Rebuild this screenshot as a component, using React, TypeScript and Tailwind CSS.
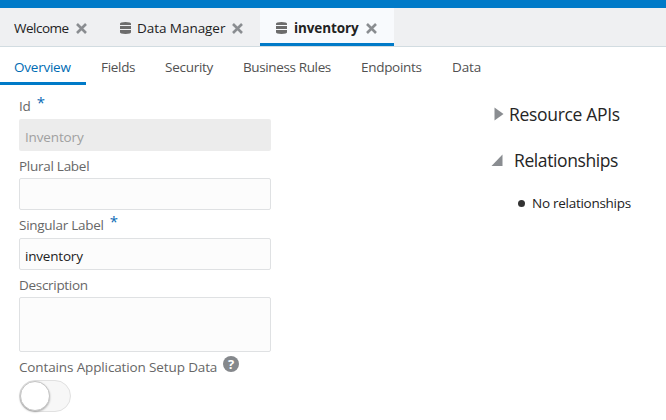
import type { ReactNode } from "react";

function Close() {
  return (
    <svg className="mt-px block shrink-0" width="11" height="11" viewBox="0 0 11 11" fill="none" stroke="#8a8d91" strokeWidth="2.6">
      <path d="M1 1 10 10M10 1 1 10" />
    </svg>
  );
}

function Database() {
  return (
    <svg className="mt-px block shrink-0" width="11" height="12" viewBox="0 0 11 12" fill="#6c6c6c">
      <path d="M0 1.8Q0 0 5.5 0T11 1.8V3H0ZM0 4H11V7H0ZM0 8H11V10.3Q11 12 5.5 12T0 10.3Z" />
    </svg>
  );
}

function Label({ children, required, className }: { children: ReactNode; required?: boolean; className: string }) {
  return (
    <div className={`flex whitespace-nowrap text-[#676767] ${className}`}>
      <span>{children}</span>
      {required && <span className="-mt-[4px] ml-[6px] text-[15px] tracking-normal text-[#0a6ab5]">*</span>}
    </div>
  );
}

const sections = [
  { name: "Fields", style: "w-[64px] tracking-[-0.3px]" },
  { name: "Security", style: "w-[78px] tracking-[-0.27px]" },
  { name: "Business Rules", style: "w-[118px] tracking-[-0.37px]" },
  { name: "Endpoints", style: "w-[91px] tracking-[-0.3px]" },
  { name: "Data", style: "w-[40px] tracking-[-0.1px]" },
];

export default function App() {
  return (
    <div className="h-[420px] w-[666px] overflow-hidden bg-white font-['Open_Sans','Noto_Sans',sans-serif] text-[13.5px] leading-5 text-[#222]">
      <div className="h-2 bg-[#007ac8]" />
      <div className="flex h-[39px] border-b border-[#d2dce1] bg-[#eff0f2] whitespace-nowrap">
        <div className="flex w-[104px] items-center pt-px pl-[14px]">
          <span className="w-[62px] tracking-[-0.5px]">Welcome</span>
          <Close />
        </div>
        <div className="flex w-[156px] items-center pt-px pl-4">
          <Database />
          <span className="ml-[6px] w-[95px] tracking-[-0.05px]">Data Manager</span>
          <Close />
        </div>
        <div className="flex h-[38px] w-[134px] items-center border-b-[3px] border-[#007ac8] bg-[#f8fafd] pt-1 pl-4">
          <Database />
          <span className="ml-[7px] w-[72px] font-bold tracking-[-0.1px]">inventory</span>
          <Close />
        </div>
      </div>
      <nav className="flex h-[38px] whitespace-nowrap text-[#515151]">
        <div className="mr-[15px] w-[86px] border-b-[3px] border-[#007ac8] pt-[10px] pl-[14px] tracking-[-0.23px] text-[#006bb3]">Overview</div>
        {sections.map((s) => (
          <div key={s.name} className={`pt-[10px] ${s.style}`}>
            {s.name}
          </div>
        ))}
      </nav>
      <main className="flex">
        <section className="w-[473px] pl-[19px]">
          <Label required className="mt-[11px] h-[23px] tracking-[-0.2px]">Id</Label>
          <div className="h-8 w-[252px] rounded-[2px] bg-[#ececec] pt-2 pl-[6px] tracking-[-0.15px] text-[#a0a0a0]">Inventory</div>
          <Label className="mt-[5px] h-[22px] tracking-[-0.27px]">Plural Label</Label>
          <div className="h-8 w-[252px] rounded-[2px] border border-[#dfe1e3] bg-[#fcfcfc]" />
          <Label required className="mt-[5px] h-[23px] tracking-[-0.27px]">Singular Label</Label>
          <div className="h-8 w-[252px] rounded-[2px] border border-[#dfe1e3] bg-[#fcfcfc] pt-[7px] pl-[5px] tracking-[-0.2px]">inventory</div>
          <Label className="mt-[5px] h-[22px] tracking-[-0.3px]">Description</Label>
          <div className="h-[55px] w-[252px] rounded-[2px] border border-[#dfe1e3] bg-[#fcfcfc]" />
          <div className="mt-[4px] flex h-6">
            <Label className="w-[204px] pt-[1px] tracking-[-0.13px]">Contains Application Setup Data</Label>
            <span className="flex size-4 items-center justify-center rounded-full bg-[#85888c] text-[13px] leading-4 font-bold text-white">?</span>
          </div>
          <div className="h-8 w-[52px] rounded-full border border-[#e1e1e1] bg-[#f7f7f7]">
            <div className="size-[30px] rounded-full border border-[#c4c4c4] bg-white shadow-[0_1px_2px_rgba(0,0,0,0.3)]" />
          </div>
        </section>
        <aside className="pt-[17px] whitespace-nowrap">
          <div className="flex h-6 items-center pl-[21px] text-[17.5px] leading-6 text-[#252525]">
            <svg className="mr-[5px] block" width="10" height="14" viewBox="0 0 10 14" fill="#8a8d91"><path d="M0.5 0.5 9.5 7 0.5 13.5Z" /></svg>
            <span className="tracking-[-0.32px]">Resource APIs</span>
          </div>
          <div className="mt-[22px] flex h-6 items-center pl-[18px] text-[17.5px] leading-6 text-[#252525]">
            <svg className="mr-[11px] block" width="12" height="12" viewBox="0 0 12 12" fill="#8a8d91"><path d="M0.5 12 11.5 0.5V12Z" /></svg>
            <span className="tracking-[-0.4px]">Relationships</span>
          </div>
          <div className="mt-[21px] flex items-center pl-[45px]">
            <span className="mr-[7px] size-[7px] rounded-full bg-[#333]" />
            <span className="tracking-[-0.27px]">No relationships</span>
          </div>
        </aside>
      </main>
    </div>
  );
}
